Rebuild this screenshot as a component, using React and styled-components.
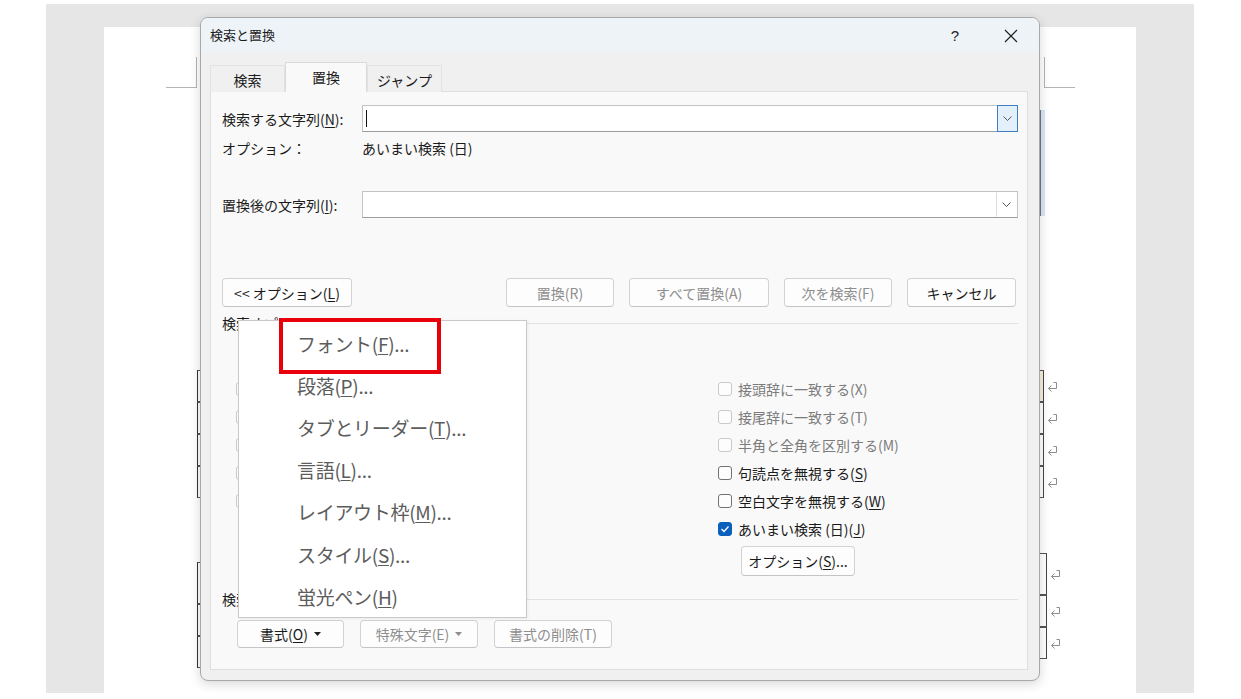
import React from 'react'
import styled, { createGlobalStyle } from 'styled-components'

const GlobalStyle = createGlobalStyle`
  html, body {
    margin: 0;
    padding: 0;
    background: #fff;
  }
  body {
    font-family: "Noto Sans CJK JP", "Noto Sans", sans-serif;
    color: #1b1b1b;
  }
  u {
    text-underline-offset: 2px;
  }
`

const Screen = styled.div`
  position: relative;
  width: 1241px;
  height: 699px;
  overflow: hidden;
  background: #fff;
  padding: 4px 0 0 46px;
  box-sizing: border-box;
`

const Workspace = styled.div`
  width: 1148px;
  height: 689px;
  background: #e6e6e6;
  padding: 23px 0 0 58px;
  box-sizing: border-box;
`

const Page = styled.div`
  position: relative;
  width: 1032px;
  height: 666px;
  background: #fff;
`

// crop marks in the page corners
const CornerMark = styled.div`
  position: absolute;
  top: 30px;
  left: ${p => (p.$right ? '940px' : '62px')};
  width: 30px;
  height: 30px;
  border-bottom: 1px solid #b4b4b4;
  ${p => (p.$right ? 'border-left: 1px solid #b4b4b4;' : 'border-right: 1px solid #b4b4b4;')}
`

const TableEdge = styled.div`
  position: absolute;
  left: ${p => p.$left}px;
  top: ${p => p.$top}px;
  display: flex;
  flex-direction: column;
`

const EdgeRow = styled.div`
  display: flex;
  align-items: center;
  gap: 3px;
  height: ${p => p.$h}px;
`

const EdgeCell = styled.div`
  width: 10px;
  height: 100%;
  box-sizing: border-box;
  border-top: 1px solid #555;
  border-bottom: 1px solid #555;
  ${p => (p.$side === 'left' ? 'border-left: 1px solid #333;' : 'border-right: 1px solid #444;')}
  background: ${p => (p.$tint ? '#f6efdc' : 'transparent')};
`

const Selection = styled.div`
  position: absolute;
  left: 936px;
  top: 83px;
  width: 4px;
  height: 106px;
  background: #dbe6f3;
  border-left: 1px solid #6a7a8c;
`

const Dialog = styled.div`
  position: absolute;
  left: 200px;
  top: 17px;
  width: 840px;
  height: 664px;
  box-sizing: border-box;
  border: 1px solid #a8a8a8;
  border-radius: 8px;
  background: #f0f0f0;
  box-shadow: 0 3px 12px rgba(0, 0, 0, 0.16);
  display: flex;
  flex-direction: column;
`

const TitleBar = styled.div`
  height: 35px;
  flex-shrink: 0;
  display: flex;
  align-items: center;
  padding: 0 5px 0 9px;
  background: #eef3f8;
  border-radius: 7px 7px 0 0;
  font-size: 13px;
  color: #1a1a1a;
`

const TitleText = styled.span`
  flex: 1;
  margin-top: -2px;
`

const TitleButton = styled.div`
  width: 46px;
  height: 35px;
  display: flex;
  align-items: center;
  justify-content: center;
  margin-left: ${p => p.$gap || 0}px;
  font-family: "Liberation Sans", sans-serif;
  font-size: 15px;
  color: #222;
`

const Body = styled.div`
  flex: 1;
  display: flex;
  flex-direction: column;
  padding: 10px 11px 10px 9px;
`

const TabBar = styled.div`
  display: flex;
  align-items: flex-end;
  height: 29px;
  position: relative;
  z-index: 1;
  margin-bottom: -1px;
`

const Tab = styled.div`
  width: ${p => p.$w}px;
  height: ${p => (p.$active ? 30 : 27)}px;
  box-sizing: border-box;
  display: flex;
  align-items: center;
  justify-content: center;
  font-size: 14px;
  color: #1b1b1b;
  background: ${p => (p.$active ? '#f9f9f9' : '#f0f0f0')};
  border: 1px solid ${p => (p.$active ? '#dadada' : '#e2e2e2')};
  border-bottom: ${p => (p.$active ? '1px solid #f9f9f9' : 'none')};
  padding-top: ${p => (p.$active ? 0 : 1)}px;
`

const Panel = styled.div`
  flex: 1;
  background: #f9f9f9;
  border: 1px solid #dedede;
  padding: 13px 9px 0 11px;
  display: flex;
  flex-direction: column;
`

const FieldRow = styled.div`
  display: flex;
  align-items: center;
  height: 27px;
  margin-top: ${p => p.$mt || 0}px;
  font-size: 14px;
`

const FieldLabel = styled.div`
  width: 140px;
  flex-shrink: 0;
  white-space: nowrap;
`

const Combo = styled.div`
  flex: 1;
  height: 27px;
  box-sizing: border-box;
  display: flex;
  align-items: center;
  background: #fff;
  border: 1px solid #c3c3c3;
  border-bottom-color: #9c9c9c;
`

const ComboInput = styled.div`
  flex: 1;
  height: 100%;
  display: flex;
  align-items: center;
  padding-left: 3px;
`

const Caret = styled.span`
  width: 1px;
  height: 17px;
  background: #111;
`

const DropButton = styled.div`
  width: 21px;
  box-sizing: border-box;
  display: flex;
  align-items: center;
  justify-content: center;
  background: ${p => (p.$hot ? '#e3f0fb' : '#fff')};
  border: 1px solid ${p => (p.$hot ? '#3f7fc1' : 'transparent')};
  border-left: 1px solid ${p => (p.$hot ? '#3f7fc1' : '#dcdcdc')};
  margin: ${p => (p.$hot ? '-1px -1px -1px 0' : '0')};
  height: ${p => (p.$hot ? '27px' : '100%')};
`

const InfoRow = styled.div`
  display: flex;
  align-items: center;
  height: 20px;
  margin-top: 6px;
  font-size: 14px;
`

const ButtonRow = styled.div`
  display: flex;
  justify-content: space-between;
  margin-top: 60px;
  padding-right: 2px;
`

const ButtonGroup = styled.div`
  display: flex;
  gap: ${p => p.$gap || 15}px;
  padding-left: ${p => p.$indent || 0}px;
  margin-top: ${p => p.$mt || 0}px;
`

const Button = styled.div`
  width: ${p => p.$w}px;
  height: ${p => p.$h || 29}px;
  box-sizing: border-box;
  display: flex;
  align-items: center;
  justify-content: center;
  gap: 6px;
  background: #fdfdfd;
  border: 1px solid #d2d2d2;
  border-bottom-color: #c4c4c4;
  border-radius: 4px;
  font-size: 14px;
  color: ${p => (p.$disabled ? '#8e8e8e' : '#1a1a1a')};
  margin-left: ${p => p.$ml || 0}px;
  margin-top: ${p => p.$mt || 0}px;
  white-space: nowrap;
`

const SectionHeader = styled.div`
  display: flex;
  align-items: center;
  gap: 8px;
  height: 16px;
  margin-top: ${p => p.$mt}px;
  font-size: 14px;
`

const Rule = styled.div`
  flex: 1;
  height: 1px;
  background: #e2e2e2;
`

const Options = styled.div`
  display: grid;
  grid-template-columns: 482px 1fr;
  margin-top: 9px;
  padding-left: 14px;
`

const OptionColumn = styled.div`
  display: flex;
  flex-direction: column;
`

const HeadRow = styled.div`
  height: 35px;
`

const CheckRow = styled.div`
  height: 28px;
  display: flex;
  align-items: center;
  gap: 6px;
  font-size: 14px;
  color: ${p => (p.$disabled ? '#7c7c7c' : '#1a1a1a')};
`

const Box = styled.span`
  width: 14px;
  height: 14px;
  box-sizing: border-box;
  border-radius: 3px;
  display: flex;
  align-items: center;
  justify-content: center;
  border: 1px solid ${p => (p.$checked ? '#0b5fbd' : p.$disabled ? '#c9c9c9' : '#727272')};
  background: ${p => (p.$checked ? '#0b5fbd' : '#fdfdfd')};
`

const Menu = styled.div`
  position: absolute;
  left: 37px;
  top: 302px;
  width: 289px;
  height: 298px;
  box-sizing: border-box;
  background: #fff;
  border: 1px solid #c9c9c9;
  box-shadow: 1px 1px 3px rgba(0, 0, 0, 0.06);
  padding-top: 1px;
  z-index: 5;
`

const MenuItem = styled.div`
  height: 42.2px;
  display: flex;
  align-items: center;
  padding-left: 58px;
  font-size: 19px;
  letter-spacing: -0.3px;
  color: #5c5c5c;
  white-space: nowrap;
`

const Highlight = styled.div`
  position: absolute;
  left: 78px;
  top: 300px;
  width: 162px;
  height: 56px;
  box-sizing: border-box;
  border: 4px solid #e8000b;
  z-index: 6;
`

const Chevron = () => (
  <svg width="9" height="5" viewBox="0 0 9 5">
    <polyline points="0.5,0.5 4.5,4.5 8.5,0.5" fill="none" stroke="#555" strokeWidth="1" />
  </svg>
)

const SmallArrow = ({ color }) => (
  <svg width="7" height="4" viewBox="0 0 7 4">
    <polygon points="0,0 7,0 3.5,4" fill={color} />
  </svg>
)

const Check = () => (
  <svg width="10" height="8" viewBox="0 0 10 8">
    <polyline points="1.5,4 4,6.5 8.5,1.5" fill="none" stroke="#fff" strokeWidth="1.3" />
  </svg>
)

const CloseIcon = () => (
  <svg width="14" height="14" viewBox="0 0 14 14">
    <path d="M1 1 L13 13 M13 1 L1 13" stroke="#222" strokeWidth="1.2" />
  </svg>
)

// paragraph mark shown at the end of table rows
const ReturnMark = () => (
  <svg width="11" height="11" viewBox="0 0 11 11">
    <path d="M6.5 1.5 H9.5 V7.5 H1.5 M4.5 4.5 L1.5 7.5 L4.5 10.5" fill="none" stroke="#8c8c8c" strokeWidth="1" />
  </svg>
)

const CheckOption = ({ children, disabled, checked }) => (
  <CheckRow $disabled={disabled}>
    <Box $disabled={disabled} $checked={checked}>{checked && <Check />}</Box>
    {children && <span>{children}</span>}
  </CheckRow>
)

const ComboBox = ({ hot, caret }) => (
  <Combo>
    <ComboInput>{caret && <Caret />}</ComboInput>
    <DropButton $hot={hot}><Chevron /></DropButton>
  </Combo>
)

const menuItems = [
  ['フォント(', 'F', ')...'],
  ['段落(', 'P', ')...'],
  ['タブとリーダー(', 'T', ')...'],
  ['言語(', 'L', ')...'],
  ['レイアウト枠(', 'M', ')...'],
  ['スタイル(', 'S', ')...'],
  ['蛍光ペン(', 'H', ')'],
]

const leftEdge = [32, 32, 32, 32]
const rightEdgeA = [32, 32, 32, 32]
const rightEdgeB = [42, 32, 32]

export default function App() {
  return (
    <>
      <GlobalStyle />
      <Screen>
        <Workspace>
          <Page>
            <CornerMark />
            <CornerMark $right />
            <Selection />
            <TableEdge $left={93} $top={343}>
              {leftEdge.map((h, i) => (
                <EdgeRow key={i} $h={h}><EdgeCell $side="left" /></EdgeRow>
              ))}
            </TableEdge>
            <TableEdge $left={93} $top={535}>
              {rightEdgeB.map((h, i) => (
                <EdgeRow key={i} $h={h}><EdgeCell $side="left" /></EdgeRow>
              ))}
            </TableEdge>
            <TableEdge $left={930} $top={343}>
              {rightEdgeA.map((h, i) => (
                <EdgeRow key={i} $h={h}>
                  <EdgeCell $side="right" $tint={i === 0} />
                  <ReturnMark />
                </EdgeRow>
              ))}
            </TableEdge>
            <TableEdge $left={933} $top={526}>
              {rightEdgeB.map((h, i) => (
                <EdgeRow key={i} $h={h}>
                  <EdgeCell $side="right" />
                  <ReturnMark />
                </EdgeRow>
              ))}
            </TableEdge>
          </Page>
        </Workspace>

        <Dialog>
          <TitleBar>
            <TitleText>検索と置換</TitleText>
            <TitleButton>?</TitleButton>
            <TitleButton $gap={10}><CloseIcon /></TitleButton>
          </TitleBar>
          <Body>
            <TabBar>
              <Tab $w={75}>検索</Tab>
              <Tab $w={82} $active>置換</Tab>
              <Tab $w={75}>ジャンプ</Tab>
            </TabBar>
            <Panel>
              <FieldRow>
                <FieldLabel>検索する文字列(<u>N</u>):</FieldLabel>
                <ComboBox hot caret />
              </FieldRow>
              <InfoRow>
                <FieldLabel>オプション：</FieldLabel>
                <span>あいまい検索 (日)</span>
              </InfoRow>
              <FieldRow $mt={33}>
                <FieldLabel>置換後の文字列(<u>I</u>):</FieldLabel>
                <ComboBox />
              </FieldRow>
              <ButtonRow>
                <Button $w={130}><span>&lt;&lt; オプション(<u>L</u>)</span></Button>
                <ButtonGroup>
                  <Button $w={108} $disabled>置換(R)</Button>
                  <Button $w={140} $disabled>すべて置換(A)</Button>
                  <Button $w={108} $disabled>次を検索(F)</Button>
                  <Button $w={109}>キャンセル</Button>
                </ButtonGroup>
              </ButtonRow>
              <SectionHeader $mt={8}>
                <span>検索オプション</span>
                <Rule />
              </SectionHeader>
              <Options>
                <OptionColumn>
                  <HeadRow />
                  {[0, 1, 2, 3, 4].map(i => (
                    <CheckOption key={i} disabled />
                  ))}
                </OptionColumn>
                <OptionColumn>
                  <HeadRow />
                  <CheckOption disabled>接頭辞に一致する(X)</CheckOption>
                  <CheckOption disabled>接尾辞に一致する(T)</CheckOption>
                  <CheckOption disabled>半角と全角を区別する(M)</CheckOption>
                  <CheckOption>句読点を無視する(<u>S</u>)</CheckOption>
                  <CheckOption>空白文字を無視する(<u>W</u>)</CheckOption>
                  <CheckOption checked>あいまい検索 (日)(<u>J</u>)</CheckOption>
                  <Button $w={114} $h={30} $ml={23} $mt={3}>
                    <span>オプション(<u>S</u>)...</span>
                  </Button>
                </OptionColumn>
              </Options>
              <SectionHeader $mt={15}>
                <span>検索</span>
                <Rule />
              </SectionHeader>
              <ButtonGroup $indent={15} $gap={16} $mt={13}>
                <Button $w={107} $h={28}>
                  <span>書式(<u>O</u>)</span>
                  <SmallArrow color="#222" />
                </Button>
                <Button $w={118} $h={28} $disabled>
                  <span>特殊文字(E)</span>
                  <SmallArrow color="#8e8e8e" />
                </Button>
                <Button $w={118} $h={28} $disabled>書式の削除(T)</Button>
              </ButtonGroup>
            </Panel>
          </Body>

          <Menu>
            {menuItems.map(([a, k, b]) => (
              <MenuItem key={k}>{a}<u>{k}</u>{b}</MenuItem>
            ))}
          </Menu>
          <Highlight />
        </Dialog>
      </Screen>
    </>
  )
}
